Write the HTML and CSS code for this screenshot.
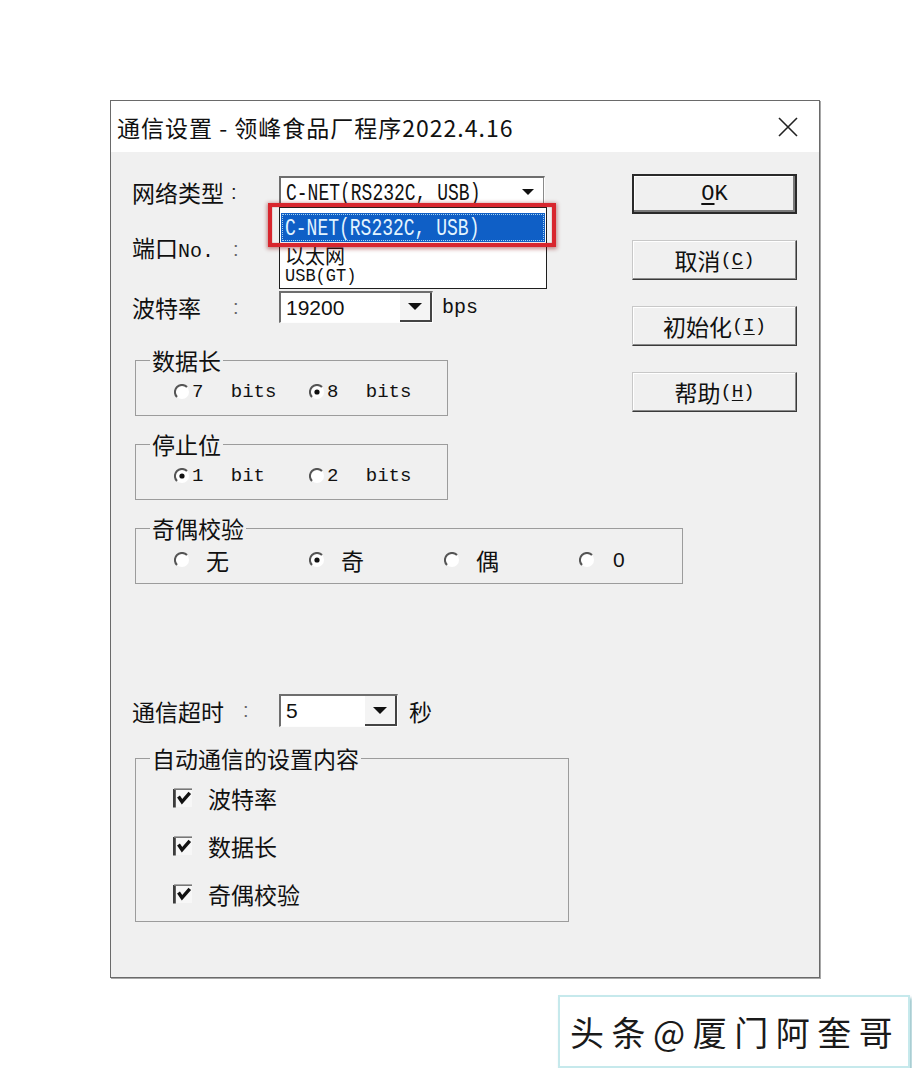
FILE: index.html
```html
<!DOCTYPE html>
<html lang="zh-CN">
<head>
<meta charset="utf-8">
<title>通信设置</title>
<link rel="stylesheet" href="styles.css">
</head>
<body>
<div class="page">
  <div class="dialog">
    <div class="titlebar">
      <span class="title">通信设置 - 领峰食品厂程序2022.4.16</span>
      <svg class="close" viewBox="0 0 20 20"><path d="M1 1 L19 19 M19 1 L1 19"/></svg>
    </div>
    <div class="body">
      <div class="left">
        <div class="row r1">
          <div class="lc"><span class="label w99">网络类型</span><span class="colon">:</span></div>
          <div class="combo net">
            <div class="field"><span class="cond">C-NET(RS232C, USB)</span></div>
            <div class="arrowbtn flat"><svg class="tri small" viewBox="0 0 12 6"><polygon points="0,0 12,0 6,6"/></svg></div>
            <div class="droplist">
              <div class="item sel"><span class="cond">C-NET(RS232C, USB)</span></div>
              <div class="item cjk">以太网</div>
              <div class="item last"><span class="cond short">USB(GT)</span></div>
            </div>
            <div class="redbox"></div>
          </div>
        </div>
        <div class="row r2">
          <div class="lc"><span class="label w101">端口<span class="mono no">No.</span></span><span class="colon light">:</span></div>
        </div>
        <div class="row r3">
          <div class="lc"><span class="label w101">波特率</span><span class="colon light">:</span></div>
          <div class="combo baud">
            <div class="field"><span class="num">19200</span></div>
            <div class="arrowbtn"><svg class="tri" viewBox="0 0 14 7"><polygon points="0,0 14,0 7,7"/></svg></div>
          </div>
          <span class="unit mono">bps</span>
        </div>

        <div class="group g1">
          <div class="legend">数据长</div>
          <div class="opts">
            <div class="opt">
              <svg class="radio" viewBox="0 0 16 16"><circle cx="8" cy="8" r="7" fill="#fff"/><path d="M13 3 A7 7 0 0 0 3 13" stroke="#555" stroke-width="2" fill="none"/></svg>
              <span class="bits">7 bits</span>
            </div>
            <div class="opt">
              <svg class="radio" viewBox="0 0 16 16"><circle cx="8" cy="8" r="7" fill="#fff"/><path d="M13 3 A7 7 0 0 0 3 13" stroke="#555" stroke-width="2" fill="none"/><circle cx="8" cy="8" r="2.6" fill="#111"/></svg>
              <span class="bits">8 bits</span>
            </div>
          </div>
        </div>

        <div class="group g2">
          <div class="legend">停止位</div>
          <div class="opts">
            <div class="opt">
              <svg class="radio" viewBox="0 0 16 16"><circle cx="8" cy="8" r="7" fill="#fff"/><path d="M13 3 A7 7 0 0 0 3 13" stroke="#555" stroke-width="2" fill="none"/><circle cx="8" cy="8" r="2.6" fill="#111"/></svg>
              <span class="bits">1 bit</span>
            </div>
            <div class="opt">
              <svg class="radio" viewBox="0 0 16 16"><circle cx="8" cy="8" r="7" fill="#fff"/><path d="M13 3 A7 7 0 0 0 3 13" stroke="#555" stroke-width="2" fill="none"/></svg>
              <span class="bits">2 bits</span>
            </div>
          </div>
        </div>

        <div class="group g3">
          <div class="legend">奇偶校验</div>
          <div class="opts">
            <div class="opt">
              <svg class="radio" viewBox="0 0 16 16"><circle cx="8" cy="8" r="7" fill="#fff"/><path d="M13 3 A7 7 0 0 0 3 13" stroke="#555" stroke-width="2" fill="none"/></svg>
              <span class="optcjk">无</span>
            </div>
            <div class="opt">
              <svg class="radio" viewBox="0 0 16 16"><circle cx="8" cy="8" r="7" fill="#fff"/><path d="M13 3 A7 7 0 0 0 3 13" stroke="#555" stroke-width="2" fill="none"/><circle cx="8" cy="8" r="2.6" fill="#111"/></svg>
              <span class="optcjk">奇</span>
            </div>
            <div class="opt">
              <svg class="radio" viewBox="0 0 16 16"><circle cx="8" cy="8" r="7" fill="#fff"/><path d="M13 3 A7 7 0 0 0 3 13" stroke="#555" stroke-width="2" fill="none"/></svg>
              <span class="optcjk">偶</span>
            </div>
            <div class="opt">
              <svg class="radio" viewBox="0 0 16 16"><circle cx="8" cy="8" r="7" fill="#fff"/><path d="M13 3 A7 7 0 0 0 3 13" stroke="#555" stroke-width="2" fill="none"/></svg>
              <span class="optnum">0</span>
            </div>
          </div>
        </div>

        <div class="row r4">
          <div class="lc"><span class="label w111">通信超时</span><span class="colon light">:</span></div>
          <div class="combo timeout">
            <div class="field"><span class="num">5</span></div>
            <div class="arrowbtn"><svg class="tri" viewBox="0 0 14 7"><polygon points="0,0 14,0 7,7"/></svg></div>
          </div>
          <span class="unit cjkunit">秒</span>
        </div>

        <div class="group g4">
          <div class="legend">自动通信的设置内容</div>
          <div class="checks">
            <div class="check-row">
              <svg class="checkbox" viewBox="0 0 20 20"><rect x="1" y="1" width="18" height="18" fill="#f7f7f7"/><path d="M1.4 19.5 V1" stroke="#3c3c3c" stroke-width="2.8"/><path d="M1 1.2 H19" stroke="#777" stroke-width="1.6"/><path d="M5.5 8.5 L9 13.8 L16.8 4.8" stroke="#111" stroke-width="3.4" fill="none"/></svg>
              <span class="cklabel">波特率</span>
            </div>
            <div class="check-row">
              <svg class="checkbox" viewBox="0 0 20 20"><rect x="1" y="1" width="18" height="18" fill="#f7f7f7"/><path d="M1.4 19.5 V1" stroke="#3c3c3c" stroke-width="2.8"/><path d="M1 1.2 H19" stroke="#777" stroke-width="1.6"/><path d="M5.5 8.5 L9 13.8 L16.8 4.8" stroke="#111" stroke-width="3.4" fill="none"/></svg>
              <span class="cklabel">数据长</span>
            </div>
            <div class="check-row">
              <svg class="checkbox" viewBox="0 0 20 20"><rect x="1" y="1" width="18" height="18" fill="#f7f7f7"/><path d="M1.4 19.5 V1" stroke="#3c3c3c" stroke-width="2.8"/><path d="M1 1.2 H19" stroke="#777" stroke-width="1.6"/><path d="M5.5 8.5 L9 13.8 L16.8 4.8" stroke="#111" stroke-width="3.4" fill="none"/></svg>
              <span class="cklabel">奇偶校验</span>
            </div>
          </div>
        </div>
      </div>

      <div class="right">
        <div class="btn default"><span class="mono big"><u>O</u>K</span></div>
        <div class="btn"><span>取消</span><span class="mono">(<u>C</u>)</span></div>
        <div class="btn"><span>初始化</span><span class="mono">(<u>I</u>)</span></div>
        <div class="btn"><span>帮助</span><span class="mono">(<u>H</u>)</span></div>
      </div>
    </div>
  </div>
  <div class="watermark">头条@厦门阿奎哥</div>
</div>
</body>
</html>
```

FILE: styles.css
```css
* { box-sizing: border-box; }
html, body { margin: 0; padding: 0; background: #fff; }
body {
  font-family: "Noto Sans CJK SC", "Liberation Sans", sans-serif;
  color: #111;
}
.page { padding: 100px 0 0 110px; }

.dialog {
  width: 710px;
  height: 878px;
  border: 1px solid #6a6a6a;
  background: #f0f0f0;
  display: flex;
  flex-direction: column;
  box-shadow: 1px 1px 0 #a8a8a8;
}
.titlebar {
  height: 51px;
  background: #fff;
  display: flex;
  align-items: center;
  justify-content: space-between;
  padding: 0 21px 0 6px;
}
.title { font-size: 23px; letter-spacing: 1px; line-height: 30px; color: #111; white-space: nowrap; }
.close { width: 20px; height: 20px; stroke: #222; stroke-width: 1.6; fill: none; }

.body { flex: 1; display: flex; }
.left { width: 521px; padding-left: 21px; display: flex; flex-direction: column; }
.right { width: 165px; padding-top: 22px; display: flex; flex-direction: column; gap: 26px; }

.mono { font-family: "Liberation Mono", monospace; font-size: 19px; }
.mono.no { font-size: 20px; }
.cond {
  font-family: "Liberation Mono", monospace;
  font-size: 18px;
  display: inline-block;
  transform: scaleY(1.35);
  white-space: nowrap;
}
.cond.short { font-size: 17px; line-height: 17px; transform: scaleY(1.1); }

.row { display: flex; align-items: center; height: 32px; flex-shrink: 0; }
.r1 { margin-top: 24px; }
.r2 { margin-top: 25px; }
.r3 { margin-top: 26px; }
.r4 { margin-top: 110px; height: 33px; }

.lc { width: 147px; display: flex; align-items: center; flex-shrink: 0; }
.label { font-size: 23px; line-height: 32px; white-space: nowrap; }
.w99 { width: 99px; }
.w101 { width: 101px; }
.w111 { width: 111px; }
.colon { font-family: "Liberation Sans", sans-serif; font-size: 20px; color: #222; }
.colon.light { color: #666; }

.combo {
  position: relative;
  display: flex;
  height: 100%;
  border-top: 2px solid #6e6e6e;
  border-left: 2px solid #6e6e6e;
  border-right: 1px solid #fdfdfd;
  border-bottom: 1px solid #fdfdfd;
  background: #fff;
  flex-shrink: 0;
}
.combo.net { width: 266px; }
.combo.baud { width: 154px; }
.combo.timeout { width: 119px; }
.field { flex: 1; padding-left: 5px; display: flex; align-items: center; overflow: visible; }
.num { font-family: "Liberation Sans", sans-serif; font-size: 21px; color: #111; }
.arrowbtn {
  width: 32px;
  background: #f4f4f4;
  border-right: 2px solid #444;
  border-bottom: 2px solid #444;
  display: flex;
  align-items: center;
  justify-content: center;
}
.arrowbtn.flat { background: #fff; border-right: 1px solid #8a8a8a; border-bottom: none; padding-bottom: 2px; }
.tri { width: 14px; height: 7px; fill: #111; }
.tri.small { width: 12px; height: 6px; }

.unit { margin-left: 9px; }
.unit.mono { font-size: 20px; }
.cjkunit { font-size: 23px; margin-left: 11px; }

.droplist {
  position: absolute;
  left: -2px;
  top: 29px;
  width: 268px;
  height: 82px;
  background: #fff;
  border: 1px solid #1e1e1e;
  padding: 5px 1px 0 1px;
  z-index: 2;
}
.item { padding-left: 4px; white-space: nowrap; overflow: visible; }
.item.sel {
  height: 29px;
  background: #0f5fc6;
  color: #e3f4ff;
  display: flex;
  align-items: center;
  outline: 1px dotted #a9d3ee;
  outline-offset: -2px;
}
.item.cjk { margin-top: 4px; height: 20px; line-height: 20px; font-size: 20px; }
.item.last { height: 18px; line-height: 18px; margin-top: 1px; display: flex; align-items: center; }
.redbox {
  position: absolute;
  left: -13px;
  top: 25px;
  width: 288px;
  height: 44px;
  border: 4px solid #d8262e;
  box-shadow: 0 1px 4px 1px rgba(130, 0, 0, 0.45), inset 0 0 1px #8a0000;
  z-index: 3;
}

.group {
  border: 1px solid #9c9c9c;
  margin-left: 3px;
  flex-shrink: 0;
}
.g1 { margin-top: 37px; height: 56px; width: 313px; }
.g2 { margin-top: 28px; height: 56px; width: 313px; }
.g3 { margin-top: 28px; height: 56px; width: 548px; }
.g4 { margin-top: 31px; height: 164px; width: 434px; }
.legend {
  margin: -13px 0 0 14px;
  padding: 0 2px;
  background: #f0f0f0;
  font-size: 23px;
  line-height: 24px;
  width: fit-content;
  white-space: nowrap;
}
.opts { display: flex; align-items: center; padding-left: 38px; margin-top: 10px; height: 20px; }
.opt { width: 135px; display: flex; align-items: center; flex-shrink: 0; }
.radio { width: 16px; height: 16px; flex-shrink: 0; }
.bits { font-family: "Liberation Mono", monospace; font-size: 19px; margin-left: 2px; word-spacing: 16px; white-space: nowrap; }
.optcjk { font-size: 23px; line-height: 24px; margin-left: 16px; }
.optnum { font-family: "Liberation Sans", sans-serif; font-size: 21px; margin-left: 18px; }

.checks { display: flex; flex-direction: column; gap: 24px; padding-left: 37px; margin-top: 16px; }
.check-row { display: flex; align-items: center; height: 24px; }
.checkbox { width: 20px; height: 20px; flex-shrink: 0; }
.cklabel { font-size: 23px; line-height: 24px; margin-left: 15px; }

.btn {
  height: 40px;
  display: flex;
  align-items: center;
  justify-content: center;
  font-size: 23px;
  background: #f0f0f0;
  border: 1px solid;
  border-color: #c8c8c8 #3a3a3a #3a3a3a #c8c8c8;
  box-shadow: inset -1px -1px #8a8a8a, inset 1px 1px #fff;
}
.btn.default {
  border: 2px solid #2a2a2a;
  box-shadow: inset -2px -2px #7a7a7a, inset 1px 1px #fff;
}
.btn .big { font-size: 22px; }
.btn u { text-underline-offset: 3px; }

.watermark {
  margin: 17px 0 0 448px;
  width: 352px;
  height: 73px;
  background: #fff;
  border: 2px solid #c6e9ec;
  box-shadow: 2px 3px 3px rgba(70, 150, 160, 0.55);
  display: flex;
  align-items: center;
  padding-left: 10px;
  font-size: 34px;
  letter-spacing: 7.5px;
  color: #1a1a1a;
  white-space: nowrap;
}
```
